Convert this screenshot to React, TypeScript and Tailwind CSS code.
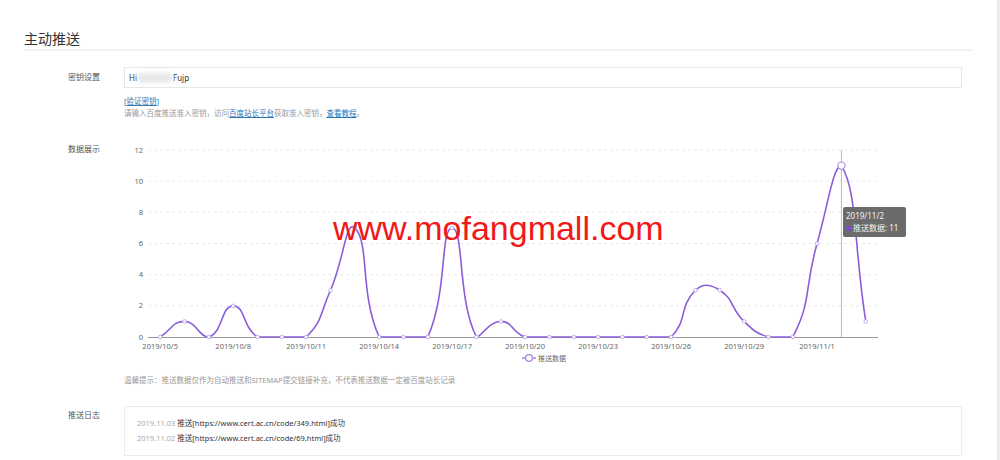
import React from 'react';

const data = [0, 1, 0, 2, 0, 0, 0, 3, 7, 0, 0, 0, 7, 0, 1, 0, 0, 0, 0, 0, 0, 0, 3, 3, 1, 0, 0, 6, 11, 1];
const startDay = 5;

function dateLabel(i: number) {
  const d = startDay + i;
  return d <= 31 ? `2019/10/${d}` : `2019/11/${d - 31}`;
}

const px = (i: number) => 36.17 + i * 24.33;
const py = (v: number) => 197 - v * 15.58;

type Pt = [number, number];

function smoothPath(pts: Pt[], smooth = 0.5) {
  const xs = pts.map((p) => p[0]);
  const ys = pts.map((p) => p[1]);
  const minX = Math.min(...xs), maxX = Math.max(...xs);
  const minY = Math.min(...ys), maxY = Math.max(...ys);
  const clamp = (c: Pt): Pt => [
    Math.min(maxX, Math.max(minX, c[0])),
    Math.min(maxY, Math.max(minY, c[1])),
  ];
  const cps = pts.map((p, i) => {
    const prev = pts[i - 1] ?? p;
    const next = pts[i + 1] ?? p;
    const vx = next[0] - prev[0];
    const vy = next[1] - prev[1];
    let d0 = Math.hypot(p[0] - prev[0], p[1] - prev[1]);
    let d1 = Math.hypot(next[0] - p[0], next[1] - p[1]);
    const sum = d0 + d1;
    if (sum) {
      d0 /= sum;
      d1 /= sum;
    }
    const c0 = clamp([p[0] - vx * smooth * d0, p[1] - vy * smooth * d0]);
    const c1 = clamp([p[0] + vx * smooth * d1, p[1] + vy * smooth * d1]);
    return [c0, c1];
  });
  let d = `M${pts[0][0]},${pts[0][1]}`;
  for (let i = 0; i < pts.length - 1; i++) {
    const a = cps[i][1];
    const b = cps[i + 1][0];
    const p = pts[i + 1];
    d += ` C${a[0].toFixed(2)},${a[1].toFixed(2)} ${b[0].toFixed(2)},${b[1].toFixed(2)} ${p[0].toFixed(2)},${p[1].toFixed(2)}`;
  }
  return d;
}

function Chart() {
  const pts: Pt[] = data.map((v, i) => [px(i), py(v)]);
  const hover = 28;
  return (
    <div className="relative w-[838px] h-[230px]">
      <svg width="838" height="230" className="block">
        {[0, 1, 2, 3, 4, 5, 6].map((k) => {
          const y = 10 + k * 31.17;
          return (
            <g key={k}>
              {k < 6 && (
                <line x1="24" x2="754" y1={y} y2={y} stroke="#e4e4e4" strokeWidth="0.8" strokeDasharray="3 3" />
              )}
              <text x="19" y={y + 2.6} textAnchor="end" fontSize="7.5" fill="#666">
                {12 - k * 2}
              </text>
            </g>
          );
        })}
        <line x1={px(hover)} x2={px(hover)} y1="10" y2="197" stroke="#bbb" strokeWidth="1" />
        <line x1="24" x2="754" y1="197.5" y2="197.5" stroke="#999" strokeWidth="1" />
        {data.map((_, i) =>
          i % 3 === 0 ? (
            <text key={i} x={px(i)} y="209" textAnchor="middle" fontSize="7.5" fill="#666">
              {dateLabel(i)}
            </text>
          ) : null
        )}
        <path d={smoothPath(pts)} fill="none" stroke="#8a5dd9" strokeWidth="1.6" />
        {pts.map((p, i) =>
          i === hover ? null : (
            <circle key={i} cx={p[0]} cy={p[1]} r="1.8" fill="#fff" stroke="#b9a2ea" strokeWidth="0.9" />
          )
        )}
        <circle cx={pts[hover][0]} cy={pts[hover][1]} r="3.6" fill="#fff" stroke="#a989e6" strokeWidth="1.1" />
        <line x1="398" x2="412" y1="218" y2="218" stroke="#a98ae6" strokeWidth="1.6" />
        <circle cx="405" cy="218" r="3.4" fill="#fff" stroke="#a98ae6" strokeWidth="1.4" />
        <text x="414" y="220.6" fontSize="7" fill="#666">推送数据</text>
      </svg>
      <div className="absolute left-[209px] top-[71px] text-[34px] leading-[34px] text-[#f01818] font-['Liberation_Sans',Arial,sans-serif] whitespace-nowrap">
        www.mofangmall.com
      </div>
      <div className="absolute left-[719px] top-[67px] w-[63px] h-[30px] rounded-[2px] bg-[#6b6b6b] px-[3px] pt-[3px] text-[8px] leading-[12px] text-[#f2f2f2]">
        <div>2019/11/2</div>
        <div className="flex items-center gap-[2px]">
          <span className="inline-block w-[5px] h-[5px] rounded-full bg-[#7b45d6]" />
          <span>推送数据: 11</span>
        </div>
      </div>
    </div>
  );
}

export default function App() {
  return (
    <div className="w-[1000px] h-[460px] flex bg-white overflow-hidden font-['Noto_Sans','Noto_Sans_CJK_SC',sans-serif]">
      <div className="flex-1 px-6">
        <div className="pt-[30px] pb-[3px] border-b-2 border-[#f2f2f2]">
          <h1 className="text-[14px] leading-[16px] text-[#333] font-['Noto_Sans_CJK_SC',sans-serif]">主动推送</h1>
        </div>

        <div className="flex pl-[44px] pr-[11px] mt-[16px]">
          <div className="w-[56px] shrink-0 pt-[4px] text-[8px] leading-[12px] text-[#555]">密钥设置</div>
          <div className="flex-1">
            <div className="h-[21px] border border-[#e6e6e6] flex items-center pl-[4px] text-[8px] text-[#333]">
              <span>Hi</span>
              <span className="inline-block w-[36px] h-[10px] bg-[#e8e8e8] blur-[2px] rounded-full" />
              <span>Fujp</span>
            </div>
            <div className="mt-[7px] text-[7.5px] leading-[12px] text-[#2a78b8]">
              [<span className="underline">验证密钥</span>]
            </div>
            <div className="text-[7.5px] leading-[12px] text-[#999]">
              请输入百度推送准入密钥，访问<span className="text-[#2a78b8] underline">百度站长平台</span>获取准入密钥，<span className="text-[#2a78b8] underline">查看教程</span>。
            </div>
          </div>
        </div>

        <div className="flex pl-[44px] pr-[11px] mt-[21px]">
          <div className="w-[56px] shrink-0 pt-[3px] text-[8px] leading-[12px] text-[#555]">数据展示</div>
          <div className="flex-1">
            <Chart />
            <div className="mt-[4px] text-[7.5px] leading-[12px] text-[#999]">
              温馨提示：推送数据仅作为自动推送和SITEMAP提交链接补充，不代表推送数据一定被百度站长记录
            </div>
          </div>
        </div>

        <div className="flex pl-[44px] pr-[11px] mt-[20px]">
          <div className="w-[56px] shrink-0 pt-[3px] text-[8px] leading-[12px] text-[#555]">推送日志</div>
          <div className="flex-1 h-[50px] border border-[#ececec] pl-[12px] pt-[10px] text-[7.5px] leading-[12px] flex flex-col gap-[3px]">
            <div>
              <span className="text-[#aaa]">2019.11.03 </span>
              <span className="text-[#333]">推送[https://www.cert.ac.cn/code/349.html]成功</span>
            </div>
            <div>
              <span className="text-[#aaa]">2019.11.02 </span>
              <span className="text-[#333]">推送[https://www.cert.ac.cn/code/69.html]成功</span>
            </div>
          </div>
        </div>
      </div>
      <div className="w-[3px] bg-[#ececec]" />
    </div>
  );
}
